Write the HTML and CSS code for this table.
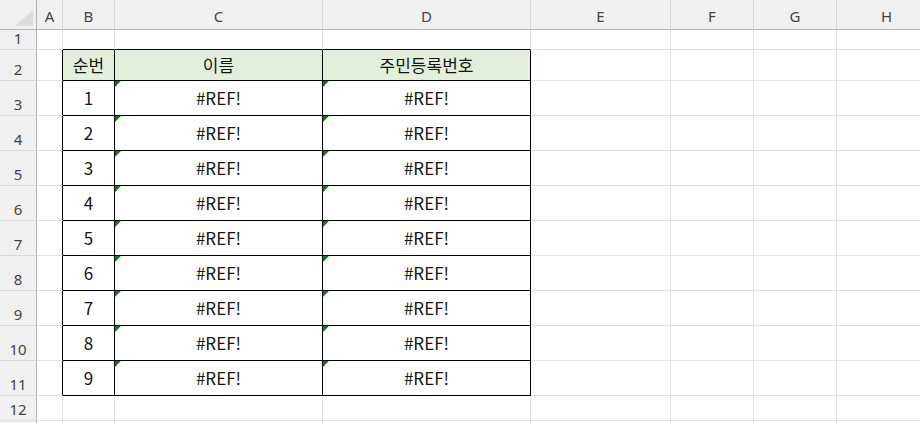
FILE: index.html
```html
<!DOCTYPE html>
<html lang="ko">
<head>
<meta charset="utf-8">
<link rel="stylesheet" href="styles.css">
</head>
<body>
<div class="sheet">
  <div class="corner"><span class="tri"></span></div>
  <div class="ch">A</div><div class="ch">B</div><div class="ch">C</div><div class="ch">D</div><div class="ch">E</div><div class="ch">F</div><div class="ch">G</div><div class="ch last">H</div>

  <div class="rh">1</div>
  <div class="c"></div><div class="c tb"></div><div class="c tb"></div><div class="c tb"></div><div class="c"></div><div class="c"></div><div class="c"></div><div class="c"></div>

  <div class="rh">2</div>
  <div class="c tr"></div><div class="c t hd">순번</div><div class="c t hd">이름</div><div class="c t hd">주민등록번호</div><div class="c"></div><div class="c"></div><div class="c"></div><div class="c"></div>

  <div class="rh">3</div>
  <div class="c tr"></div><div class="c t">1</div><div class="c t e">#REF!</div><div class="c t e">#REF!</div><div class="c"></div><div class="c"></div><div class="c"></div><div class="c"></div>
  <div class="rh">4</div>
  <div class="c tr"></div><div class="c t">2</div><div class="c t e">#REF!</div><div class="c t e">#REF!</div><div class="c"></div><div class="c"></div><div class="c"></div><div class="c"></div>
  <div class="rh">5</div>
  <div class="c tr"></div><div class="c t">3</div><div class="c t e">#REF!</div><div class="c t e">#REF!</div><div class="c"></div><div class="c"></div><div class="c"></div><div class="c"></div>
  <div class="rh">6</div>
  <div class="c tr"></div><div class="c t">4</div><div class="c t e">#REF!</div><div class="c t e">#REF!</div><div class="c"></div><div class="c"></div><div class="c"></div><div class="c"></div>
  <div class="rh">7</div>
  <div class="c tr"></div><div class="c t">5</div><div class="c t e">#REF!</div><div class="c t e">#REF!</div><div class="c"></div><div class="c"></div><div class="c"></div><div class="c"></div>
  <div class="rh">8</div>
  <div class="c tr"></div><div class="c t">6</div><div class="c t e">#REF!</div><div class="c t e">#REF!</div><div class="c"></div><div class="c"></div><div class="c"></div><div class="c"></div>
  <div class="rh">9</div>
  <div class="c tr"></div><div class="c t">7</div><div class="c t e">#REF!</div><div class="c t e">#REF!</div><div class="c"></div><div class="c"></div><div class="c"></div><div class="c"></div>
  <div class="rh">10</div>
  <div class="c tr"></div><div class="c t">8</div><div class="c t e">#REF!</div><div class="c t e">#REF!</div><div class="c"></div><div class="c"></div><div class="c"></div><div class="c"></div>
  <div class="rh">11</div>
  <div class="c tr"></div><div class="c t">9</div><div class="c t e">#REF!</div><div class="c t e">#REF!</div><div class="c"></div><div class="c"></div><div class="c"></div><div class="c"></div>

  <div class="rh">12</div>
  <div class="c"></div><div class="c"></div><div class="c"></div><div class="c"></div><div class="c"></div><div class="c"></div><div class="c"></div><div class="c"></div>
  <div class="rh"></div>
  <div class="c"></div><div class="c"></div><div class="c"></div><div class="c"></div><div class="c"></div><div class="c"></div><div class="c"></div><div class="c"></div>
</div>
</body>
</html>
```
FILE: styles.css
```css
html, body {
  margin: 0;
  padding: 0;
  background: #ffffff;
  overflow: hidden;
}
.sheet {
  display: grid;
  grid-template-columns: 37px 26px 52px 208px 208px 140px 83px 83px 100px;
  grid-template-rows: 30px 20px 31px repeat(9, 35px) 25px 30px;
  width: 937px;
  height: 423px;
  overflow: hidden;
  font-family: "Noto Sans CJK KR", "Noto Sans", sans-serif;
}
.corner {
  background: #f0f0f0;
  border-right: 1px solid #b4b4b4;
  border-bottom: 1px solid #b4b4b4;
  position: relative;
}
.tri {
  position: absolute;
  left: 15px;
  top: 10px;
  width: 0;
  height: 0;
  border-left: 18px solid transparent;
  border-bottom: 16px solid #dcdcdc;
}
.ch {
  background: #f0f0f0;
  border-right: 1px solid #d8d8d8;
  border-bottom: 1px solid #b4b4b4;
  display: flex;
  align-items: center;
  justify-content: center;
  color: #444444;
  font-family: "Noto Sans", "Noto Sans CJK KR", sans-serif;
  font-size: 15px;
  padding-top: 2px;
}
.rh {
  background: #f0f0f0;
  border-right: 1px solid #b4b4b4;
  border-bottom: 1px solid #d8d8d8;
  display: flex;
  align-items: flex-end;
  justify-content: center;
  color: #444444;
  font-family: "Noto Sans", "Noto Sans CJK KR", sans-serif;
  font-size: 15px;
  line-height: 20px;
  padding-bottom: 1px;
}
.c {
  border-right: 1px solid #e1e1e1;
  border-bottom: 1px solid #e1e1e1;
  display: flex;
  align-items: center;
  justify-content: center;
  font-size: 17px;
  color: #151515;
  position: relative;
  box-sizing: border-box;
  padding-bottom: 2px;
}
.tb { border-bottom-color: #000000; }
.tr { border-right-color: #000000; }
.t {
  border-right-color: #000000;
  border-bottom-color: #000000;
}
.hd {
  background: #e2efda;
}
.e::before {
  content: "";
  position: absolute;
  left: 0;
  top: 0;
  width: 0;
  height: 0;
  border-top: 6px solid #137a13;
  border-right: 6px solid transparent;
}
```
